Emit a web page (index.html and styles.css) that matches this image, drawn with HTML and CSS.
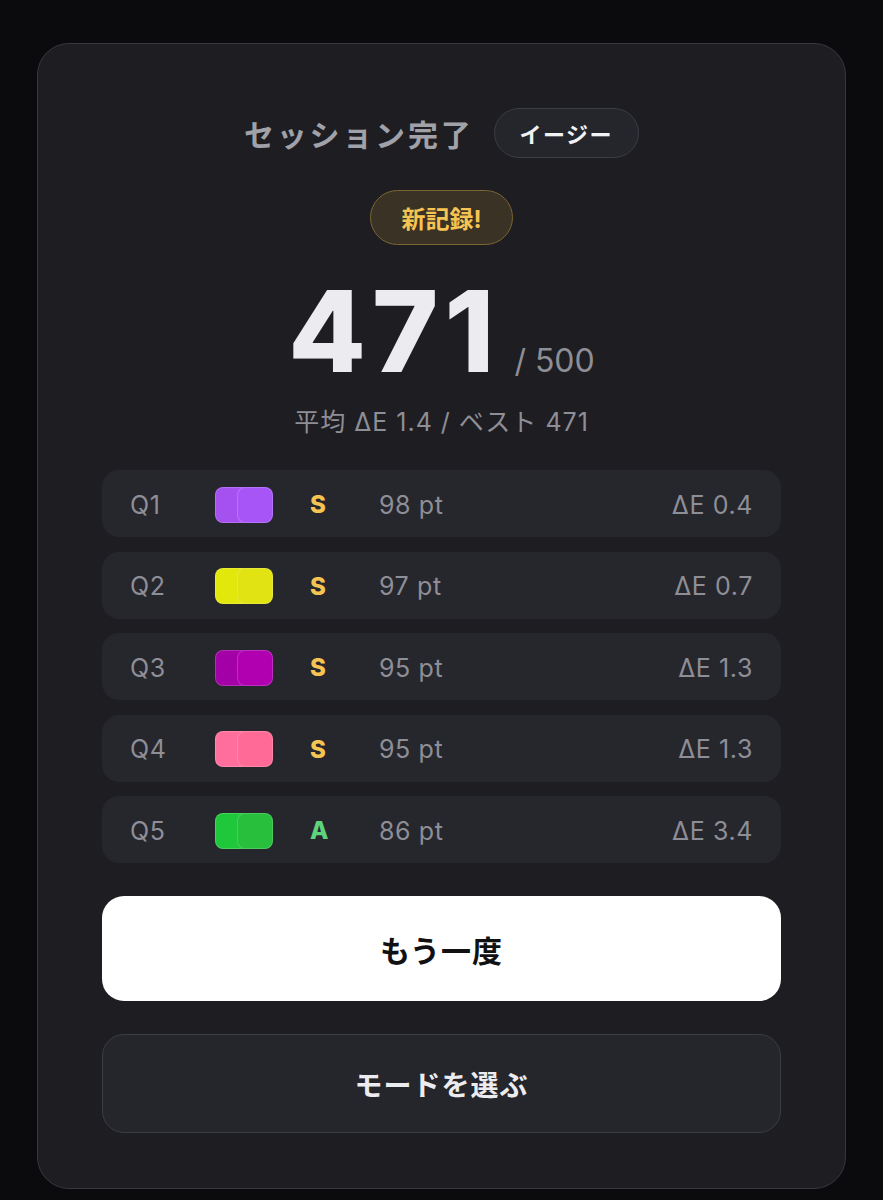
FILE: index.html
```html
<!DOCTYPE html>
<html lang="ja">
<head>
<meta charset="utf-8">
<title>セッション完了</title>
<link rel="stylesheet" href="styles.css">
</head>
<body>
<main class="card">
  <header class="head">
    <h1 class="title">セッション完了</h1>
    <span class="mode">イージー</span>
  </header>
  <div class="record">新記録!</div>
  <div class="score">
    <span class="big">471</span>
    <span class="max">/ 500</span>
  </div>
  <p class="sub">平均 ΔE 1.4 / ベスト 471</p>
  <ul class="rows">
    <li class="row">
      <span class="q">Q1</span>
      <span class="sw"><i style="background:#a451ef"></i><i style="background:#a855f7"></i></span>
      <span class="grade s">S</span>
      <span class="pt">98 pt</span>
      <span class="de">ΔE 0.4</span>
    </li>
    <li class="row">
      <span class="q">Q2</span>
      <span class="sw"><i style="background:#e3e80c"></i><i style="background:#e1e412"></i></span>
      <span class="grade s">S</span>
      <span class="pt">97 pt</span>
      <span class="de">ΔE 0.7</span>
    </li>
    <li class="row">
      <span class="q">Q3</span>
      <span class="sw"><i style="background:#a300a8"></i><i style="background:#b000b0"></i></span>
      <span class="grade s">S</span>
      <span class="pt">95 pt</span>
      <span class="de">ΔE 1.3</span>
    </li>
    <li class="row">
      <span class="q">Q4</span>
      <span class="sw"><i style="background:#ff6e9c"></i><i style="background:#ff6b96"></i></span>
      <span class="grade s">S</span>
      <span class="pt">95 pt</span>
      <span class="de">ΔE 1.3</span>
    </li>
    <li class="row">
      <span class="q">Q5</span>
      <span class="sw"><i style="background:#1fc83a"></i><i style="background:#27bf3c"></i></span>
      <span class="grade a">A</span>
      <span class="pt">86 pt</span>
      <span class="de">ΔE 3.4</span>
    </li>
  </ul>
  <button class="btn primary">もう一度</button>
  <button class="btn secondary">モードを選ぶ</button>
</main>
</body>
</html>
```
FILE: styles.css
```css
* { box-sizing: border-box; }
html, body { margin: 0; padding: 0; }
body {
  background: #0b0b0e;
  font-family: Inter, "Noto Sans CJK JP", sans-serif;
  min-height: 1200px;
  padding: 43px 37px 11px;
}
.card {
  background: #1d1d22;
  border: 1.5px solid #38383e;
  border-radius: 32px;
  width: 809px;
  height: 1146px;
  padding: 64px 64px 0;
  display: flex;
  flex-direction: column;
  align-items: center;
}
.head {
  display: flex;
  align-items: center;
  gap: 20px;
  height: 50px;
  padding-left: 0;
}
.title {
  margin: 0;
  font-size: 30px;
  font-weight: 700;
  letter-spacing: 2.8px;
  color: #a1a1a9;
}
.mode {
  display: flex;
  align-items: center;
  height: 50px;
  padding: 0 25px;
  border: 1.5px solid #3c3c44;
  border-radius: 25px;
  background: #25252c;
  color: #f2f2f5;
  font-size: 22px;
  font-weight: 700;
  letter-spacing: 1.5px;
}
.record {
  margin-top: 32px;
  height: 55px;
  padding: 0 30px;
  display: flex;
  align-items: center;
  border: 1.5px solid #7b6633;
  border-radius: 28px;
  background: #3a3225;
  color: #f6c452;
  font-size: 24px;
  font-weight: 700;
}
.score {
  display: flex;
  align-items: baseline;
  gap: 14px;
  margin-top: 21px;
  height: 130px;
  padding-left: 0;
}
.big {
  font-size: 113px;
  font-weight: 800;
  color: #ececf0;
  line-height: 130px;
  letter-spacing: 6px;
}
.max {
  font-size: 32px;
  color: #8e8e96;
}
.sub {
  margin: 9px 0 0;
  font-size: 25px;
  letter-spacing: 1px;
  color: #8e8e96;
  line-height: 34px;
}
.rows {
  list-style: none;
  margin: 31px 0 0;
  padding: 0;
  width: 100%;
  display: flex;
  flex-direction: column;
  gap: 14.5px;
}
.row {
  height: 67px;
  background: #26262d;
  border-radius: 17px;
  display: grid;
  grid-template-columns: 85px 95px 69px 1fr auto;
  align-items: center;
  padding: 2px 28px 0;
  font-size: 25px;
  letter-spacing: 0.6px;
  color: #8e8e96;
}
.sw {
  position: relative;
  display: block;
  width: 58px;
  height: 36px;
}
.sw i {
  position: absolute;
  top: 0;
  width: 36px;
  height: 36px;
  border-radius: 8px;
  border: 1.5px solid rgba(255,255,255,0.18);
}
.sw i:first-child { left: 0; }
.sw i:last-child { left: 22px; }
.grade { font-weight: 800; font-size: 24px; }
.grade.s { color: #f6c452; }
.grade.a { color: #5fd37c; }
.de { text-align: right; }
.btn {
  width: 100%;
  font-family: Inter, "Noto Sans CJK JP", sans-serif;
  font-weight: 700;
  border-radius: 22px;
  cursor: pointer;
  flex-shrink: 0;
}
.primary {
  margin-top: 33px;
  height: 105px;
  background: #ffffff;
  border: none;
  color: #111114;
  font-size: 30px;
  letter-spacing: 1px;
}
.secondary {
  margin-top: 33px;
  height: 99px;
  background: #25252c;
  border: 1.5px solid #3c3c44;
  color: #ececf0;
  font-size: 28px;
  letter-spacing: 1px;
}
```
